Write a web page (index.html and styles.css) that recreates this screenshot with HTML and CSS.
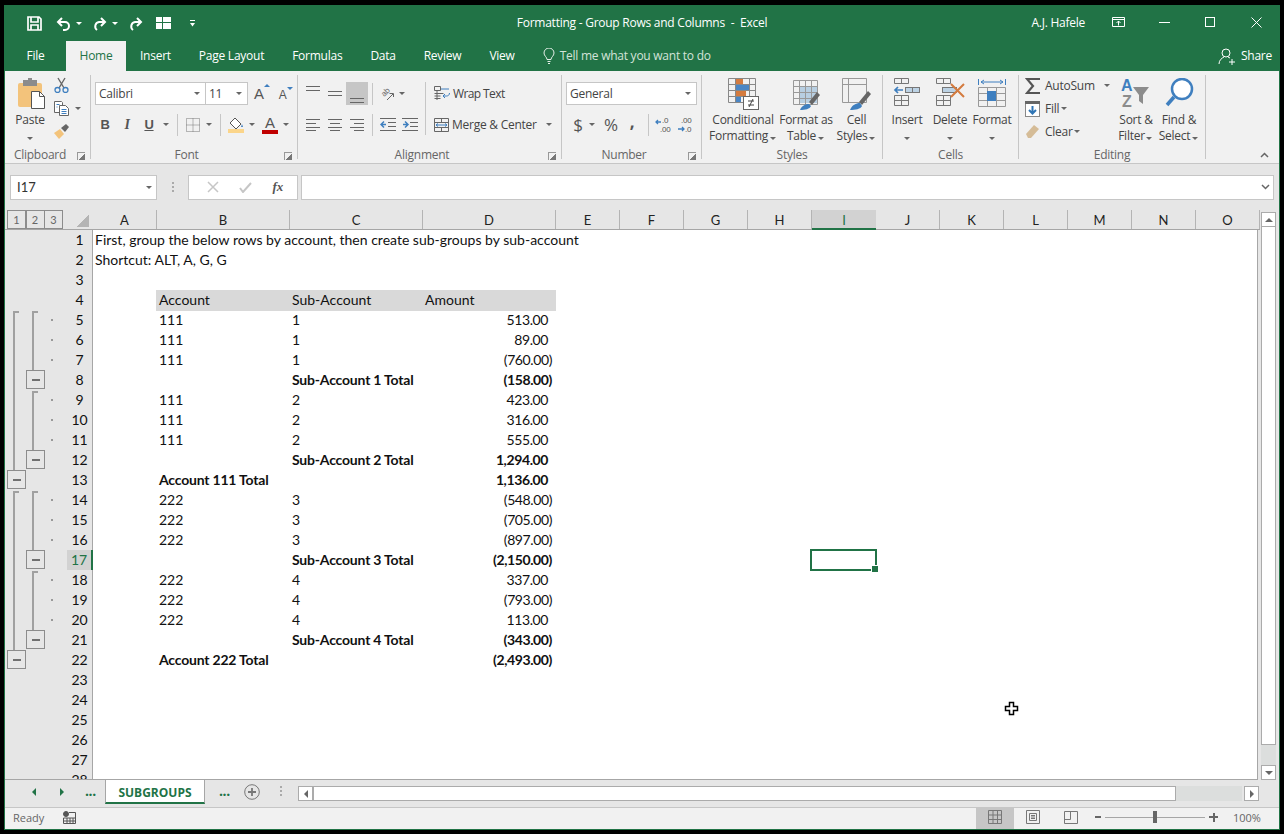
FILE: index.html
```html
<!DOCTYPE html>
<html lang="en">
<head>
    <meta charset="UTF-8">
    <title>Formatting - Group Rows and Columns - Excel</title>
    <link rel="stylesheet" href="styles.css">
</head>
<body>
<div class="window">

    <!-- title bar -->
    <div class="titlebar">
        <div class="qat">
            <svg class="ml0" width="15" height="15" viewBox="0 0 15 15" fill="none" stroke="#fff" stroke-width="1.7"><path d="M1 1h11l2 2v11H1zM4 1v5h7V1M4 14V9h7v5"/></svg>
            <svg class="ml14" width="15" height="15" viewBox="0 0 15 15" fill="none" stroke="#fff" stroke-width="2"><path d="M6 2L2 6l4 4M2 6h7a4 4 0 0 1 0 8H7"/></svg>
            <span class="caret-w ml5"></span>
            <svg class="ml10" width="15" height="15" viewBox="0 0 15 15" fill="none" stroke="#fff" stroke-width="2"><path d="M9 2l4 4-4 4M13 6H7a4.500 4.500 0 0 0-2 8"/></svg>
            <span class="caret-w ml5"></span>
            <svg class="ml10" width="15" height="15" viewBox="0 0 15 15" fill="none" stroke="#fff" stroke-width="2"><path d="M9 2l4 4-4 4M13 6H7a4.500 4.500 0 0 0-2 8"/></svg>
            <svg class="ml13" width="15" height="12" viewBox="0 0 15 12" fill="#fff"><rect width="6" height="5"/><rect x="7" width="8" height="5"/><rect y="6" width="6" height="6"/><rect x="7" y="6" width="8" height="6"/></svg>
            <svg class="ml18" width="7" height="7" viewBox="0 0 7 7" fill="#fff"><rect x="1" width="5" height="1"/><path d="M1 3h5L3.500 6.500z"/></svg>
        </div>
        <div class="doc-title">Formatting - Group Rows and Columns &nbsp;-&nbsp; Excel</div>
        <div class="win-right">
            <span class="user">A.J. Hafele</span>
            <span class="win-btn"><svg width="13" height="10" viewBox="0 0 13 10" fill="none" stroke="#fff"><path d="M.5.500h12v9H.5zM.5 2.500h12M6.500 8.500V4M4.500 6l2-2 2 2"/></svg></span>
            <span class="win-btn"><svg width="11" height="1" viewBox="0 0 11 1"><rect width="11" height="1" fill="#fff"/></svg></span>
            <span class="win-btn"><svg width="10" height="10" viewBox="0 0 10 10" fill="none" stroke="#fff"><rect x=".5" y=".5" width="9" height="9"/></svg></span>
            <span class="win-btn"><svg width="11" height="11" viewBox="0 0 11 11" stroke="#fff"><path d="M.5.500l10 10M10.500.500l-10 10"/></svg></span>
        </div>
    </div>

    <!-- ribbon tabs -->
    <div class="tabs">
        <span class="tab file">File</span>
        <span class="tab active">Home</span>
        <span class="tab">Insert</span>
        <span class="tab">Page Layout</span>
        <span class="tab">Formulas</span>
        <span class="tab">Data</span>
        <span class="tab">Review</span>
        <span class="tab">View</span>
        <span class="tell">
            <svg width="12" height="16" viewBox="0 0 12 16" fill="none" stroke="#e6efe9"><path d="M4 11.500C4 9 1 8 1 5a5 5 0 0 1 10 0c0 3-3 4-3 6.500zM4.500 13.500h3M5 15.500h2"/></svg>
            Tell me what you want to do
        </span>
        <span class="share">
            <svg width="18" height="17" viewBox="0 0 18 17" fill="none" stroke="#fff"><circle cx="8" cy="5" r="4"/><path d="M1 16c0-4 3-6 5-7M10 9l2 1M11 14h6M14 11v6"/></svg>
            Share
        </span>
    </div>

    <!-- ribbon -->
    <div class="ribbon">

        <div class="group clipboard">
            <div class="group-body">
                <div class="big paste">
                    <svg width="30" height="32" viewBox="0 0 30 32"><rect x="1" y="5" width="24" height="24" rx="2" fill="#f3c37b"/><rect x="6" y="2" width="14" height="6" fill="#8c8c8c"/><rect x="11" y="0" width="4" height="4" fill="#8c8c8c"/><path d="M14.500 13.500h8l5 5v12h-13z" fill="#fff" stroke="#555"/><path d="M22.500 13.500v5h5" fill="none" stroke="#555"/></svg>
                    <span class="big-label">Paste<br><i class="caret"></i></span>
                </div>
                <div class="clip-tools">
                    <svg width="15" height="16" viewBox="0 0 15 16" fill="none"><path d="M4 1l6 10M11 1L5 11" stroke="#666" stroke-width="1.400"/><circle cx="3.500" cy="13" r="2.500" stroke="#3f7fbf" stroke-width="1.300"/><circle cx="11.500" cy="13" r="2.500" stroke="#3f7fbf" stroke-width="1.300"/></svg>
                    <span class="copy-row">
                        <svg width="15" height="15" viewBox="0 0 15 15" fill="#fff" stroke="#666"><path d="M.5.500h7l1 1v10H.5z"/><path d="M5.500 4.500h6l3 3v7h-9z"/><path d="M2.500 3.500h3M2.500 6h1M7.500 8.500h5M7.500 10.500h5M7.500 12.500h5" stroke="#3f7fbf"/></svg>
                        <i class="caret"></i>
                    </span>
                    <svg width="16" height="15" viewBox="0 0 16 15"><path d="M0 9l6-4 4 5-5 5z" fill="#f3c37b"/><path d="M7 4l5-4 3 3-4 5z" fill="#666"/></svg>
                </div>
            </div>
            <div class="group-label"><span>Clipboard</span><i class="launcher"></i></div>
        </div>

        <div class="group font">
            <div class="group-body stack">
                <div class="tool-row pad4">
                    <span class="combo w-font">Calibri<i class="caret"></i></span>
                    <span class="combo w-size">11<i class="caret"></i></span>
                    <span class="grow-a">A<i class="up"></i></span>
                    <span class="shrink-a">A<i class="down"></i></span>
                </div>
                <div class="tool-row pad3">
                    <span class="tool t22 bold-t">B</span>
                    <span class="tool t22 ital-t">I</span>
                    <span class="tool t22 under-t">U</span>
                    <i class="caret"></i>
                    <span class="sep"></span>
                    <span class="tool t19">
                        <svg width="14" height="14" viewBox="0 0 14 14" fill="none" stroke="#777" stroke-dasharray="1 1"><path d="M.5.500h13v13H.5zM7 .5v13M.5 7h13"/></svg>
                    </span>
                    <i class="caret ml1"></i>
                    <span class="sep"></span>
                    <span class="tool t20">
                        <svg width="16" height="16" viewBox="0 0 16 16"><path d="M7 1l6 6-5 5-6-6z" fill="#fff" stroke="#555"/><path d="M14 7l1 3h-2z" fill="#3f7fbf"/><rect y="12" width="16" height="4" fill="#fbd58a"/></svg>
                    </span>
                    <i class="caret"></i>
                    <span class="tool t20 color-a ml2">A</span>
                    <i class="caret"></i>
                </div>
            </div>
            <div class="group-label"><span>Font</span><i class="launcher"></i></div>
        </div>

        <div class="group align">
            <div class="group-body split">
                <div class="stack w-align">
                    <div class="tool-row pad4">
                        <span class="tool t22 al-top"><i class="lines"></i></span>
                        <span class="tool t22"><i class="lines"></i></span>
                        <span class="tool t22 al-bot selected"><i class="lines"></i></span>
                        <span class="sep ml4"></span>
                        <span class="tool t18 ml5">
                            <svg width="18" height="17" viewBox="0 0 18 17" fill="none" stroke="#666"><text x="3" y="10" class="orient" transform="rotate(-45 7 7)">ab</text><path d="M9 15l6-6M11.500 8.500h4V12"/></svg>
                        </span>
                        <i class="caret"></i>
                    </div>
                    <div class="tool-row pad4">
                        <span class="tool t22"><i class="text-lines left"></i></span>
                        <span class="tool t22"><i class="text-lines center"></i></span>
                        <span class="tool t22"><i class="text-lines right"></i></span>
                        <span class="sep ml4"></span>
                        <span class="tool t22 ml4">
                            <svg width="16" height="13" viewBox="0 0 16 13" fill="none"><path d="M0 .5h16M8 4.500h8M8 8.500h8M0 12.500h16" stroke="#666"/><path d="M6 6.500H1M4 3.500l-3 3 3 3" stroke="#3f7fbf" stroke-width="1.500"/></svg>
                        </span>
                        <span class="tool t22">
                            <svg width="16" height="13" viewBox="0 0 16 13" fill="none"><path d="M0 .5h16M8 4.500h8M8 8.500h8M0 12.500h16" stroke="#666"/><path d="M1 6.500h5M3 3.500l3 3-3 3" stroke="#3f7fbf" stroke-width="1.500"/></svg>
                        </span>
                    </div>
                </div>
                <span class="vsep"></span>
                <div class="stack pad8">
                    <div class="tool-row">
                        <svg width="16" height="15" viewBox="0 0 16 15" fill="none" stroke="#666"><path d="M.5.500h6v4h-6zM.5 7.500h9M.5 10h6M.5 12.500h6M3 4.500V14"/><path d="M7 3h8M15.500 7c0 2-1.500 3-3 3H9M11 8l-2 2 2 2" stroke="#3f7fbf"/></svg>
                        <span class="tool-text wrap-text">Wrap Text</span>
                    </div>
                    <div class="tool-row">
                        <svg width="15" height="14" viewBox="0 0 15 14" fill="none" stroke="#666"><path d="M.5.500h14v13H.5zM.5 4.500h14M.5 9.500h14M7.500.5v4M7.500 9.500v4"/><path d="M2 7h11M4 5.500L2 7l2 1.500M11 5.500L13 7l-2 1.500" stroke="#3f7fbf"/></svg>
                        <span class="tool-text">Merge &amp; Center</span>
                        <i class="caret merge-caret"></i>
                    </div>
                </div>
            </div>
            <div class="group-label"><span>Alignment</span><i class="launcher"></i></div>
        </div>

        <div class="group number">
            <div class="group-body stack">
                <div class="tool-row pad4">
                    <span class="combo w-general">General<i class="caret"></i></span>
                </div>
                <div class="tool-row pad8">
                    <span class="tool t16 money">$</span>
                    <i class="caret"></i>
                    <span class="tool t22 money ml2">%</span>
                    <span class="tool t20 money comma">,</span>
                    <span class="sep ml6"></span>
                    <span class="tool t22 ml3">
                        <svg width="16" height="16" viewBox="0 0 16 16" class="dec-icon"><text x="7" y="6">.0</text><text x="5" y="15">.00</text><path d="M6 5H1M3 3L1 5l2 2" fill="none" stroke="#3f7fbf" stroke-width="1.300"/></svg>
                    </span>
                    <span class="tool t22">
                        <svg width="16" height="16" viewBox="0 0 16 16" class="dec-icon"><text x="4" y="6">.00</text><text x="8" y="15">.0</text><path d="M1 12h6M5 10l2 2-2 2" fill="none" stroke="#3f7fbf" stroke-width="1.300"/></svg>
                    </span>
                </div>
            </div>
            <div class="group-label"><span>Number</span><i class="launcher"></i></div>
        </div>

        <div class="group styles">
            <div class="group-body rowbtns ml5">
                <div class="big w72">
                    <svg width="31" height="32" viewBox="0 0 31 32" fill="none"><path d="M.5.500h27v24H.5zM.5 6.500h27M.5 12.500h27M.5 18.500h27M7.500.5v24M21.500.5v24" stroke="#888"/><rect x="8" y="1" width="7" height="5" fill="#d47b3f"/><rect x="8" y="7" width="13" height="5" fill="#4a86c5"/><rect x="8" y="13" width="10" height="5" fill="#d47b3f"/><rect x="8" y="19" width="5" height="5" fill="#4a86c5"/><rect x="15.500" y="18.500" width="15" height="13" fill="#fff" stroke="#666"/><path d="M20 23h6M20 27h6M25 21l-4 8" stroke="#444"/></svg>
                    <span class="big-label">Conditional<br>Formatting<i class="caret tight"></i></span>
                </div>
                <div class="big w54">
                    <svg width="30" height="32" viewBox="-2 -2 30 32" fill="none"><rect x="7" y="6" width="18" height="17" fill="#b8cfe2"/><path d="M.5.500h24v24H.5zM.5 6.500h24M.5 12.500h24M.5 18.500h24M6.500.5v24M12.500.5v24M18.500.5v24" stroke="#999"/><path d="M16 22l8-10 3 3-8 10z" fill="#666"/><path d="M7 30c2-5 6-6 9-6l2 2c-1 3-6 4-11 4z" fill="#3f7fbf"/></svg>
                    <span class="big-label">Format as<br>Table<i class="caret tight"></i></span>
                </div>
                <div class="big w47">
                    <svg width="30" height="32" viewBox="0 0 30 32" fill="none"><path d="M.5.500h24v24H.5zM.5 6.500h24M6.500.5v24" stroke="#999"/><path d="M17 24l9-11 3 3-9 11z" fill="#666"/><path d="M8 32c2-5 6-7 10-7l2 3c-1 3-7 4-12 4z" fill="#3f7fbf"/></svg>
                    <span class="big-label">Cell<br>Styles<i class="caret tight"></i></span>
                </div>
            </div>
            <div class="group-label"><span>Styles</span></div>
        </div>

        <div class="group cells">
            <div class="group-body rowbtns ml3">
                <div class="big w42">
                    <svg width="28" height="32" viewBox="0 0 28 32" fill="none" stroke="#777"><path d="M1.500.5h14v5h-14zM8.500.5v5M1.500 17.500h14v10h-14zM1.500 22.500h14M8.500 17.500v10"/><rect x="12.500" y="9.500" width="14" height="5" fill="#bcd2e4"/><path d="M19.500 9.500v5M26.500 9.500"/><path d="M10 12H2M5 9l-3 3 3 3" stroke="#3f7fbf" stroke-width="1.700"/></svg>
                    <span class="big-label">Insert<br><i class="caret"></i></span>
                </div>
                <div class="big w44">
                    <svg width="30" height="32" viewBox="0 0 30 32" fill="none" stroke="#777"><path d="M1.500.5h14v5h-14zM8.500.5v5M1.500 17.500h14v10h-14zM1.500 22.500h14M8.500 17.500v10"/><rect x="7.500" y="9.500" width="14" height="5" fill="#bcd2e4"/><path d="M16 6l13 13M29 6L16 19" stroke="#d47b3f" stroke-width="2"/></svg>
                    <span class="big-label">Delete<br><i class="caret"></i></span>
                </div>
                <div class="big w40">
                    <svg width="28" height="32" viewBox="0 0 28 32" fill="none" stroke="#999"><path d="M.5 1v6M27.500 1v6M3 4h22M6 2L3 4l3 2M22 2l3 2-3 2" stroke="#3f7fbf"/><path d="M.5 9.500h27v19H.5zM.5 15.500h27M.5 22.500h27M9.500 9.500v19M18.500 9.500v19"/><rect x="9" y="13" width="9" height="10" fill="#3f7fbf" stroke="none"/></svg>
                    <span class="big-label">Format<br><i class="caret"></i></span>
                </div>
            </div>
            <div class="group-label"><span>Cells</span></div>
        </div>

        <div class="group editing">
            <div class="group-body rowbtns">
                <div class="edit-tools">
                    <div class="edit-row">
                        <svg width="15" height="16" viewBox="0 0 15 16" fill="none" stroke="#555" stroke-width="2.200"><path d="M15 1H2l6 7-6 7h13"/></svg>
                        <span class="tool-text">AutoSum</span><i class="caret sum-caret"></i>
                    </div>
                    <div class="edit-row">
                        <svg width="15" height="16" viewBox="0 0 15 16"><rect x=".5" y=".5" width="14" height="15" fill="#fff" stroke="#888"/><rect width="15" height="3" fill="#666"/><path d="M7.500 5v7M4 9l3.500 3.500L11 9" fill="none" stroke="#2f75b5" stroke-width="2"/></svg>
                        <span class="tool-text">Fill</span><i class="caret tight"></i>
                    </div>
                    <div class="edit-row">
                        <svg width="15" height="15" viewBox="0 0 15 15"><path d="M1 10l8-9 5 4-8 9H3z" fill="#d5bc97"/></svg>
                        <span class="tool-text">Clear</span><i class="caret tight"></i>
                    </div>
                </div>
                <div class="big w44">
                    <svg width="30" height="32" viewBox="0 0 30 32"><text x="0" y="13" class="az a">A</text><text x="1" y="29" class="az z">Z</text><path d="M12 9h16l-6 8v9l-4-3v-6z" fill="#8c8c8c"/></svg>
                    <span class="big-label">Sort &amp;<br>Filter<i class="caret tight"></i></span>
                </div>
                <div class="big w42">
                    <svg width="29" height="32" viewBox="0 0 29 32" fill="none" stroke="#3f7fbf"><circle cx="17" cy="11" r="10" stroke-width="2.500" fill="#fff"/><path d="M9 19L2 27" stroke-width="3.500"/></svg>
                    <span class="big-label">Find &amp;<br>Select<i class="caret tight"></i></span>
                </div>
            </div>
            <div class="group-label"><span>Editing</span></div>
        </div>

        <div class="collapse">
            <svg width="9" height="6" viewBox="0 0 9 6" fill="none" stroke="#666" stroke-width="1.500"><path d="M1 5l3.500-3.500L8 5"/></svg>
        </div>
    </div>

    <!-- name box and formula bar -->
    <div class="formula-bar">
        <div class="name-box">I17<i class="caret"></i></div>
        <div class="grip"></div>
        <div class="fx-box">
            <svg width="12" height="12" viewBox="0 0 12 12" stroke="#c6c6c6" stroke-width="1.500"><path d="M1 1l10 10M11 1L1 11"/></svg>
            <svg width="13" height="11" viewBox="0 0 13 11" fill="none" stroke="#c6c6c6" stroke-width="2"><path d="M1 6l3 4 8-9"/></svg>
            <span class="fx">fx</span>
        </div>
        <div class="formula-input"></div>
        <svg class="formula-chevron" width="9" height="6" viewBox="0 0 9 6" fill="none" stroke="#666" stroke-width="1.500"><path d="M1 1l3.500 3.500L8 1"/></svg>
    </div>

    <!-- worksheet -->
    <div class="sheet">
        <div class="sheet-main">
            <div class="col-row">
                <div class="levels"><span>1</span><span>2</span><span>3</span></div>
                <div class="corner"><i></i></div>
                <div class="col c-a">A</div>
                <div class="col c-b">B</div>
                <div class="col c-b">C</div>
                <div class="col c-b">D</div>
                <div class="col">E</div>
                <div class="col">F</div>
                <div class="col">G</div>
                <div class="col">H</div>
                <div class="col current">I</div>
                <div class="col">J</div>
                <div class="col">K</div>
                <div class="col">L</div>
                <div class="col">M</div>
                <div class="col">N</div>
                <div class="col">O</div>
            </div>
            <div class="rows">
                <div class="row"><div class="outline"></div><div class="num">1</div><div class="cell wide">First, group the below rows by account, then create sub-groups by sub-account</div></div>
                <div class="row"><div class="outline"></div><div class="num">2</div><div class="cell wide">Shortcut: ALT, A, G, G</div></div>
                <div class="row"><div class="outline"></div><div class="num">3</div></div>
                <div class="row"><div class="outline"></div><div class="num">4</div><div class="cell"></div><div class="cell head">Account</div><div class="cell head">Sub-Account</div><div class="cell head">Amount</div></div>
                <div class="row"><div class="outline"><i class="line top"></i><i class="line top"></i><i class="dot"></i></div><div class="num">5</div><div class="cell"></div><div class="cell">111</div><div class="cell">1</div><div class="cell amt">513.00</div></div>
                <div class="row"><div class="outline"><i class="line"></i><i class="line"></i><i class="dot"></i></div><div class="num">6</div><div class="cell"></div><div class="cell">111</div><div class="cell">1</div><div class="cell amt">89.00</div></div>
                <div class="row"><div class="outline"><i class="line"></i><i class="line"></i><i class="dot"></i></div><div class="num">7</div><div class="cell"></div><div class="cell">111</div><div class="cell">1</div><div class="cell amt neg">(760.00)</div></div>
                <div class="row total"><div class="outline"><i class="line"></i><i class="minus"></i></div><div class="num">8</div><div class="cell"></div><div class="cell"></div><div class="cell">Sub-Account 1 Total</div><div class="cell amt neg">(158.00)</div></div>
                <div class="row"><div class="outline"><i class="line"></i><i class="line top"></i><i class="dot"></i></div><div class="num">9</div><div class="cell"></div><div class="cell">111</div><div class="cell">2</div><div class="cell amt">423.00</div></div>
                <div class="row"><div class="outline"><i class="line"></i><i class="line"></i><i class="dot"></i></div><div class="num">10</div><div class="cell"></div><div class="cell">111</div><div class="cell">2</div><div class="cell amt">316.00</div></div>
                <div class="row"><div class="outline"><i class="line"></i><i class="line"></i><i class="dot"></i></div><div class="num">11</div><div class="cell"></div><div class="cell">111</div><div class="cell">2</div><div class="cell amt">555.00</div></div>
                <div class="row total"><div class="outline"><i class="line"></i><i class="minus"></i></div><div class="num">12</div><div class="cell"></div><div class="cell"></div><div class="cell">Sub-Account 2 Total</div><div class="cell amt">1,294.00</div></div>
                <div class="row total"><div class="outline"><i class="minus"></i></div><div class="num">13</div><div class="cell"></div><div class="cell wide">Account 111 Total</div><div class="cell"></div><div class="cell amt">1,136.00</div></div>
                <div class="row"><div class="outline"><i class="line top"></i><i class="line top"></i><i class="dot"></i></div><div class="num">14</div><div class="cell"></div><div class="cell">222</div><div class="cell">3</div><div class="cell amt neg">(548.00)</div></div>
                <div class="row"><div class="outline"><i class="line"></i><i class="line"></i><i class="dot"></i></div><div class="num">15</div><div class="cell"></div><div class="cell">222</div><div class="cell">3</div><div class="cell amt neg">(705.00)</div></div>
                <div class="row"><div class="outline"><i class="line"></i><i class="line"></i><i class="dot"></i></div><div class="num">16</div><div class="cell"></div><div class="cell">222</div><div class="cell">3</div><div class="cell amt neg">(897.00)</div></div>
                <div class="row total"><div class="outline"><i class="line"></i><i class="minus"></i></div><div class="num current">17</div><div class="cell"></div><div class="cell"></div><div class="cell">Sub-Account 3 Total</div><div class="cell amt neg">(2,150.00)</div></div>
                <div class="row"><div class="outline"><i class="line"></i><i class="line top"></i><i class="dot"></i></div><div class="num">18</div><div class="cell"></div><div class="cell">222</div><div class="cell">4</div><div class="cell amt">337.00</div></div>
                <div class="row"><div class="outline"><i class="line"></i><i class="line"></i><i class="dot"></i></div><div class="num">19</div><div class="cell"></div><div class="cell">222</div><div class="cell">4</div><div class="cell amt neg">(793.00)</div></div>
                <div class="row"><div class="outline"><i class="line"></i><i class="line"></i><i class="dot"></i></div><div class="num">20</div><div class="cell"></div><div class="cell">222</div><div class="cell">4</div><div class="cell amt">113.00</div></div>
                <div class="row total"><div class="outline"><i class="line"></i><i class="minus"></i></div><div class="num">21</div><div class="cell"></div><div class="cell"></div><div class="cell">Sub-Account 4 Total</div><div class="cell amt neg">(343.00)</div></div>
                <div class="row total"><div class="outline"><i class="minus"></i></div><div class="num">22</div><div class="cell"></div><div class="cell wide">Account 222 Total</div><div class="cell"></div><div class="cell amt neg">(2,493.00)</div></div>
                <div class="row"><div class="outline"></div><div class="num">23</div></div>
                <div class="row"><div class="outline"></div><div class="num">24</div></div>
                <div class="row"><div class="outline"></div><div class="num">25</div></div>
                <div class="row"><div class="outline"></div><div class="num">26</div></div>
                <div class="row"><div class="outline"></div><div class="num">27</div></div>
                <div class="row"><div class="outline"></div><div class="num">28</div></div>
                <div class="selection"></div>
                <svg class="cursor" width="15" height="16" viewBox="0 0 15 16"><path d="M5.500 1.500h4v4h4v4h-4v4h-4v-4h-4v-4h4z" fill="#fff" stroke="#000" stroke-width="1.500"/></svg>
            </div>
        </div>
        <div class="vscroll">
            <span class="sb-btn"><i class="tri-up"></i></span>
            <span class="sb-thumb"></span>
            <span class="sb-track"></span>
            <span class="sb-btn"><i class="tri-down"></i></span>
        </div>
    </div>

    <!-- sheet tabs -->
    <div class="tabbar">
        <span class="nav first"><i class="tri-left"></i></span>
        <span class="nav"><i class="tri-right"></i></span>
        <span class="more m1">...</span>
        <span class="sheet-tab">SUBGROUPS</span>
        <span class="more m2">...</span>
        <svg width="16" height="16" viewBox="0 0 16 16" fill="none" stroke="#777"><circle cx="8" cy="8" r="7.300"/><path d="M8 4v8M4 8h8" stroke-width="1.800"/></svg>
        <span class="vdots"><i></i><i></i><i></i></span>
        <div class="hscroll">
            <span class="sb-btn h"><i class="tri-left grey"></i></span>
            <span class="sb-thumb h"></span>
            <span class="sb-track h"></span>
            <span class="sb-btn h"><i class="tri-right grey"></i></span>
        </div>
    </div>

    <!-- status bar -->
    <div class="statusbar">
        <span class="ready">Ready</span>
        <svg class="macro" width="13" height="13" viewBox="0 0 13 13" fill="none" stroke="#555"><circle cx="3" cy="3" r="2.500" fill="#555"/><path d="M6 1.500h6.500v11H.5V7h12M4 7v5.500M7 7v5.500M10 7v5.500M.5 10h12"/></svg>
        <div class="views">
            <span class="view selected">
                <svg width="14" height="14" viewBox="0 0 14 14" fill="none" stroke="#777"><path d="M.5.500h13v13H.5zM5 .5v13M9.500.5v13M.5 5h13M.5 9.500h13"/></svg>
            </span>
            <span class="view">
                <svg width="14" height="14" viewBox="0 0 14 14" fill="none" stroke="#777"><path d="M.5.500h13v13H.5zM3.500 3.500h7v7h-7zM5 5.500h4M5 7h4M5 8.500h4"/></svg>
            </span>
            <span class="view">
                <svg width="14" height="13" viewBox="0 0 14 13" fill="none" stroke="#777"><path d="M.5.500h13v12H.5zM.5 8.500h6V.5M6.500 8.500"/></svg>
            </span>
        </div>
        <span class="zoom-minus"></span>
        <div class="slider"><i></i></div>
        <span class="zoom-plus"></span>
        <span class="zoom-pct">100%</span>
    </div>
</div>
</body>
</html>
```

FILE: styles.css
```css
* {
    box-sizing: border-box;
}
body {
    margin: 5px 4px 4px;
    background: #000;
    font-family: "Open Sans", sans-serif;
    font-size: 12px;
    letter-spacing: -0.25px;
    color: #444;
}
i {
    font-style: normal;
}
.window {
    width: 1276px;
    height: 825px;
    border: 1px solid #217346;
    display: flex;
    flex-direction: column;
    background: #e6e6e6;
    overflow: hidden;
}

/* title bar */
.titlebar {
    height: 35px;
    flex: none;
    background: #217346;
    color: #fff;
    display: grid;
    grid-template-columns: 1fr auto 1fr;
    align-items: center;
}
.qat {
    display: flex;
    align-items: center;
    padding: 0 0 1px 22px;
}
.ml0 { margin-left: 0; }
.ml1 { margin-left: 1px; }
.ml2 { margin-left: 2px; }
.ml3 { margin-left: 3px; }
.ml4 { margin-left: 4px; }
.ml5 { margin-left: 5px; }
.ml6 { margin-left: 6px; }
.ml10 { margin-left: 10px; }
.ml13 { margin-left: 13px; }
.ml14 { margin-left: 14px; }
.ml18 { margin-left: 18px; }
.caret-w {
    width: 0;
    height: 0;
    border: 3px solid transparent;
    border-top-color: #fff;
    border-bottom: 0;
}
.doc-title {
    padding-bottom: 3px;
}
.win-right {
    display: flex;
    justify-content: flex-end;
    align-items: center;
    padding-bottom: 3px;
}
.user {
    margin-right: 10px;
}
.win-btn {
    width: 46px;
    display: flex;
    justify-content: center;
}

/* tabs */
.tabs {
    height: 30px;
    flex: none;
    background: #217346;
    color: #fff;
    display: flex;
    align-items: stretch;
    line-height: 30px;
}
.tab {
    padding: 0 14px;
}
.tab.file {
    width: 61px;
    padding: 0;
    text-align: center;
}
.tab.active {
    width: 60px;
    padding: 0;
    text-align: center;
    background: #f1f1f1;
    color: #217346;
}
.tell {
    display: flex;
    align-items: center;
    gap: 5px;
    margin-left: 14px;
    color: #d3e3d9;
}
.share {
    margin-left: auto;
    display: flex;
    align-items: center;
    gap: 5px;
    padding-right: 7px;
}

/* ribbon */
.ribbon {
    height: 93px;
    flex: none;
    display: flex;
    align-items: flex-start;
    background: #f1f1f1;
    border-bottom: 1px solid #c6c6c6;
    position: relative;
}
.group {
    height: 84px;
    margin-top: 4px;
    border-right: 1px solid #c6c6c6;
    display: flex;
    flex-direction: column;
    flex: none;
}
.clipboard { width: 86px; }
.font { width: 207px; }
.align { width: 264px; }
.number { width: 140px; }
.styles { width: 181px; }
.cells { width: 136px; }
.editing { width: 187px; }
.group-body {
    height: 72px;
    display: flex;
}
.group-label {
    height: 12px;
    line-height: 16px;
    display: flex;
    color: #666;
}
.group-label span {
    flex: 1;
    text-align: center;
}
.launcher {
    width: 15px;
    flex: none;
}
.launcher::before {
    content: "";
    display: block;
    width: 7px;
    height: 7px;
    margin-top: 5px;
    margin-left: 2px;
    border-left: 1px solid #999;
    border-top: 1px solid #999;
    background: linear-gradient(135deg, transparent 55%, #777 55%);
}
.stack {
    display: flex;
    flex-direction: column;
    gap: 8px;
    padding-top: 7px;
}
.tool-row {
    height: 23px;
    display: flex;
    align-items: center;
    flex: none;
}
.pad3 { padding-left: 3px; }
.pad4 { padding-left: 4px; }
.pad8 { padding-left: 8px; }
.tool {
    height: 23px;
    display: flex;
    align-items: center;
    justify-content: center;
    flex: none;
}
.t16 { width: 16px; }
.t18 { width: 18px; }
.t19 { width: 19px; }
.t20 { width: 20px; }
.t22 { width: 22px; }
.sep {
    width: 1px;
    height: 22px;
    margin: 0 5px;
    background: #c6c6c6;
    flex: none;
}
.sep.ml4 { margin: 0 0 0 4px; }
.sep.ml6 { margin: 0 0 0 6px; }
.vsep {
    width: 1px;
    height: 53px;
    margin-top: 7px;
    background: #c6c6c6;
    flex: none;
}
.caret {
    width: 12px;
    height: 10px;
    flex: none;
    display: inline-flex;
    align-items: center;
    justify-content: center;
}
.caret::after {
    content: "";
    border: 3px solid transparent;
    border-top-color: #666;
    border-bottom: 0;
}
.caret.tight {
    width: 9px;
}
.big {
    display: flex;
    flex-direction: column;
    align-items: center;
    padding-top: 3px;
    flex: none;
    text-align: center;
    color: #444;
}
.big svg {
    flex: none;
}
.big-label {
    margin-top: 2px;
    line-height: 16px;
    white-space: nowrap;
}
.big-label .caret {
    vertical-align: 0;
}
.paste {
    width: 36px;
    margin-left: 7px;
}
.paste svg {
    height: 32px;
    margin-left: 3px;
}
.clip-tools {
    display: flex;
    flex-direction: column;
    padding: 2px 0 0 6px;
    gap: 8px;
}
.copy-row {
    display: flex;
    align-items: center;
    gap: 3px;
}
.combo {
    height: 23px;
    border: 1px solid #c6c6c6;
    background: #fff;
    display: flex;
    align-items: center;
    justify-content: space-between;
    padding-left: 3px;
    padding-right: 2px;
    flex: none;
}
.w-font { width: 111px; }
.w-size { width: 42px; margin-left: 0; border-left: 0; }
.w-general { width: 131px; }
.grow-a, .shrink-a {
    display: flex;
    align-items: flex-start;
    font-family: "Liberation Sans", sans-serif;
    color: #555;
    flex: none;
}
.grow-a {
    font-size: 15px;
    margin-left: 6px;
}
.shrink-a {
    font-size: 12px;
    margin-left: 9px;
    padding-top: 2px;
}
.up, .down {
    border: 3px solid transparent;
    margin-top: -1px;
}
.up { border-bottom-color: #3f7fbf; border-top: 0; }
.down { border-top-color: #3f7fbf; border-bottom: 0; }
.bold-t, .ital-t, .under-t {
    font-family: "Liberation Sans", sans-serif;
    font-size: 13px;
    color: #555;
}
.bold-t { font-weight: bold; }
.ital-t { font-style: italic; font-family: "Liberation Serif", serif; font-size: 14px; font-weight: bold; }
.under-t { text-decoration: underline; font-weight: bold; }
.color-a {
    font-family: "Liberation Sans", sans-serif;
    font-size: 15px;
    line-height: 13px;
    color: #555;
    flex-direction: column;
}
.color-a::after {
    content: "";
    width: 16px;
    height: 4px;
    background: #c00000;
    margin-top: 1px;
}
.w-align {
    width: 127px;
}
.split {
    align-items: flex-start;
}
.lines {
    width: 14px;
    height: 5px;
    border-top: 1px solid #666;
    border-bottom: 1px solid #666;
}
.al-top {
    align-items: flex-start;
    padding-top: 4px;
}
.al-bot {
    align-items: flex-end;
    padding-bottom: 2px;
}
.selected {
    background: #c6c6c6;
}
.orient {
    font-family: "Liberation Sans", sans-serif;
    font-size: 8px;
    fill: #666;
    stroke: none;
}
.text-lines {
    width: 14px;
    height: 12px;
    background:
        linear-gradient(#666, #666) 0 0 / 14px 1px no-repeat,
        linear-gradient(#666, #666) 0 4px / 10px 1px no-repeat,
        linear-gradient(#666, #666) 0 8px / 14px 1px no-repeat,
        linear-gradient(#666, #666) 0 11px / 10px 1px no-repeat;
}
.text-lines.center {
    background:
        linear-gradient(#666, #666) 0 0 / 14px 1px no-repeat,
        linear-gradient(#666, #666) 2px 4px / 10px 1px no-repeat,
        linear-gradient(#666, #666) 0 8px / 14px 1px no-repeat,
        linear-gradient(#666, #666) 2px 11px / 10px 1px no-repeat;
}
.text-lines.right {
    background:
        linear-gradient(#666, #666) 0 0 / 14px 1px no-repeat,
        linear-gradient(#666, #666) 4px 4px / 10px 1px no-repeat,
        linear-gradient(#666, #666) 0 8px / 14px 1px no-repeat,
        linear-gradient(#666, #666) 4px 11px / 10px 1px no-repeat;
}
.tool-text {
    margin-left: 3px;
}
.wrap-text {
    letter-spacing: -0.6px;
}
.merge-caret {
    margin-left: 6px;
}
.money {
    font-size: 17px;
    color: #555;
}
.comma {
    font-weight: bold;
    padding-bottom: 6px;
}
.dec-icon {
    font-family: "Liberation Sans", sans-serif;
    font-size: 8px;
    fill: #555;
}
.rowbtns {
    align-items: flex-start;
}
.w40 { width: 40px; }
.w42 { width: 42px; }
.w44 { width: 44px; }
.w47 { width: 47px; }
.w54 { width: 54px; }
.w72 { width: 72px; }
.edit-tools {
    width: 95px;
    padding-left: 6px;
    margin-top: -1px;
    flex: none;
}
.edit-row {
    height: 23px;
    display: flex;
    align-items: center;
}
.edit-row .tool-text {
    margin-left: 5px;
}
.sum-caret {
    margin-left: 6px;
}
.az {
    font-family: "Liberation Sans", sans-serif;
    font-weight: bold;
    font-size: 16px;
}
.az.a { fill: #3f7fbf; }
.az.z { fill: #8c8c8c; }
.collapse {
    position: absolute;
    right: 10px;
    bottom: 5px;
    line-height: 0;
}

/* formula bar */
.formula-bar {
    height: 46px;
    flex: none;
    display: flex;
    align-items: center;
    padding: 0 5px;
}
.name-box {
    width: 147px;
    height: 25px;
    background: #fff;
    border: 1px solid #c6c6c6;
    display: flex;
    align-items: center;
    justify-content: space-between;
    padding-left: 6px;
    padding-right: 1px;
    font-family: Lato, sans-serif;
    font-size: 13px;
    letter-spacing: 0;
    color: #333;
}
.grip {
    width: 2px;
    height: 10px;
    margin: 0 14px 0 15px;
    background: repeating-linear-gradient(#aaa 0 2px, transparent 2px 4px);
}
.fx-box {
    width: 110px;
    height: 25px;
    background: #fff;
    border: 1px solid #c6c6c6;
    display: flex;
    align-items: center;
    justify-content: space-around;
    padding: 0 4px 0 8px;
}
.fx {
    font-family: "Liberation Serif", serif;
    font-style: italic;
    font-weight: bold;
    font-size: 13px;
    color: #555;
}
.formula-input {
    width: 973px;
    height: 25px;
    margin-left: 3px;
    background: #fff;
    border: 1px solid #c6c6c6;
}
.formula-chevron {
    margin-left: -13px;
    position: relative;
}

/* worksheet */
.sheet {
    height: 570px;
    flex: none;
    display: flex;
}
.sheet-main {
    width: 1255px;
    flex: none;
    display: flex;
    flex-direction: column;
}
.col-row {
    height: 20px;
    flex: none;
    display: flex;
    border-bottom: 1px solid #a6a6a6;
    font-family: Lato, sans-serif;
    font-size: 13px;
    letter-spacing: 0;
    color: #222;
}
.levels {
    width: 62px;
    padding-left: 2px;
    display: flex;
    flex: none;
}
.levels span {
    width: 19px;
    height: 19px;
    border: 1px solid #8c8c8c;
    margin-right: -0.5px;
    text-align: center;
    line-height: 17px;
    font-size: 11px;
    color: #666;
}
.corner {
    width: 26px;
    flex: none;
    display: flex;
    justify-content: flex-end;
    align-items: flex-end;
    padding: 0 4px 2px 0;
}
.corner i {
    width: 12px;
    height: 12px;
    background: linear-gradient(135deg, transparent 50%, #b4b4b4 50%);
}
.col {
    width: 64px;
    flex: none;
    text-align: center;
    line-height: 20px;
    border-right: 1px solid #b4b4b4;
}
.col.c-a { width: 64px; }
.col.c-b { width: 133px; }
.col.current {
    background: #d2d2d2;
    border-bottom: 2px solid #217346;
    border-right: 0;
    height: 20px;
    color: #217346;
}
.rows {
    height: 550px;
    margin-right: 2px;
    background: #fff;
    border-right: 1px solid #a6a6a6;
    border-bottom: 1px solid #a6a6a6;
    overflow: hidden;
    position: relative;
    font-family: Lato, sans-serif;
    font-size: 14px;
    letter-spacing: 0;
    color: #111;
}
.row {
    height: 20px;
    display: grid;
    grid-template-columns: 62px 26px 63px 133px 133px 134px;
}
.outline {
    background: #e6e6e6;
    display: grid;
    grid-template-columns: 19px 19px 24px;
    height: 20px;
}
.line {
    width: 2px;
    margin-left: 8px;
    background: #a0a0a0;
}
.line.top {
    width: 6px;
    height: 19px;
    margin-top: 1px;
    background: linear-gradient(#a0a0a0, #a0a0a0) 0 0 / 6px 2px no-repeat,
        linear-gradient(#a0a0a0, #a0a0a0) 0 0 / 2px 100% no-repeat;
}
.dot {
    width: 2px;
    height: 2px;
    margin: 9px 0 0 8px;
    background: #999;
}
.minus {
    width: 19px;
    height: 19px;
    margin-left: 2px;
    border: 1px solid #8c8c8c;
    background: #e6e6e6;
    display: flex;
    align-items: center;
    justify-content: center;
}
.minus::before {
    content: "";
    width: 8px;
    height: 2px;
    background: #707070;
}
.num {
    background: #e6e6e6;
    border-right: 1px solid #a6a6a6;
    border-bottom: 1px solid #c6c6c6;
    text-align: center;
    line-height: 20px;
}
.num.current {
    background: #d2d2d2;
    border-right: 2px solid #217346;
    color: #217346;
}
.cell {
    padding-left: 3px;
    line-height: 20px;
    white-space: nowrap;
}
.cell.wide {
    padding-left: 2px;
}
.total .cell {
    font-weight: bold;
    letter-spacing: -0.2px;
}
.total .cell.wide {
    padding-left: 3px;
}
.cell.head {
    background: #d9d9d9;
}
.cell.amt, .total .cell.amt {
    text-align: right;
    padding-right: 8px;
    letter-spacing: -0.4px;
}
.cell.amt.neg {
    padding-right: 4px;
}
.selection {
    position: absolute;
    left: 805px;
    top: 319px;
    width: 67px;
    height: 22px;
    border: 2px solid #217346;
}
.selection::after {
    content: "";
    position: absolute;
    right: -4px;
    bottom: -4px;
    width: 6px;
    height: 6px;
    background: #217346;
    border: 1px solid #fff;
}
.cursor {
    position: absolute;
    left: 999px;
    top: 471px;
}
.vscroll {
    width: 15px;
    margin-left: 1px;
    padding-top: 2px;
    display: flex;
    flex-direction: column;
    background: #dcdedd;
    background-clip: content-box;
}
.sb-btn {
    height: 15px;
    flex: none;
    background: #fff;
    border: 1px solid #ababab;
    display: flex;
    align-items: center;
    justify-content: center;
}
.sb-thumb {
    height: 518px;
    flex: none;
    background: #fff;
    border: 1px solid #ababab;
    border-top: 0;
}
.sb-track {
    flex: 1;
}
.tri-up, .tri-down, .tri-left, .tri-right {
    width: 0;
    height: 0;
    border: 4px solid transparent;
}
.tri-up { border-bottom-color: #666; border-top: 0; }
.tri-down { border-top-color: #666; border-bottom: 0; }
.tri-left { border-right-color: #217346; border-left: 0; }
.tri-right { border-left-color: #217346; border-right: 0; }
.tri-left.grey { border-right-color: #666; }
.tri-right.grey { border-left-color: #666; }

/* sheet tabs */
.tabbar {
    height: 28px;
    flex: none;
    display: flex;
    align-items: flex-start;
    border-bottom: 1px solid #c6c6c6;
    padding-left: 15px;
}
.tabbar > svg {
    margin-top: 4px;
    flex: none;
}
.nav {
    width: 28px;
    height: 24px;
    display: flex;
    align-items: center;
    justify-content: center;
    flex: none;
}
.more {
    color: #217346;
    font-weight: bold;
    font-size: 14px;
    line-height: 22px;
    text-align: center;
    flex: none;
}
.m1 { width: 29px; }
.m2 { width: 39px; }
.sheet-tab {
    width: 100px;
    height: 24px;
    background: #fff;
    border: 1px solid #a6a6a6;
    border-top: 0;
    border-bottom: 2px solid #217346;
    color: #217346;
    font-weight: bold;
    text-align: center;
    line-height: 25px;
    letter-spacing: 0;
    flex: none;
}
.vdots {
    width: 38px;
    padding-top: 6px;
    padding-left: 4px;
    display: flex;
    flex-direction: column;
    align-items: center;
    gap: 2px;
    flex: none;
}
.vdots i {
    width: 2px;
    height: 2px;
    background: #aaa;
}
.hscroll {
    margin-top: 6px;
    height: 15px;
    width: 961px;
    display: flex;
    flex: none;
}
.sb-btn.h {
    width: 15px;
}
.sb-thumb.h {
    width: 863px;
    height: 15px;
    border: 1px solid #ababab;
}
.sb-track.h {
    background: #dcdedd;
    margin-right: 2px;
}

/* status bar */
.statusbar {
    height: 21px;
    flex: none;
    background: #f1f1f1;
    display: flex;
    align-items: center;
    padding: 0 0 3px 8px;
    color: #666;
    font-size: 11px;
    letter-spacing: 0;
}
.ready {
    width: 50px;
}
.macro {
    flex: none;
}
.views {
    display: flex;
    margin: 3px 0 0 auto;
    height: 21px;
}
.view {
    width: 38px;
    display: flex;
    align-items: center;
    justify-content: center;
    padding-bottom: 3px;
}
.zoom-minus {
    width: 6px;
    height: 2px;
    margin-left: 5px;
    background: #666;
}
.slider {
    width: 100px;
    height: 12px;
    margin-left: 4px;
    display: flex;
    justify-content: center;
    background: linear-gradient(#a6a6a6, #a6a6a6) 0 50% / 100% 1px no-repeat;
}
.slider i {
    width: 4px;
    height: 12px;
    background: #666;
}
.zoom-plus {
    width: 9px;
    height: 9px;
    margin-left: 4px;
    background:
        linear-gradient(#666, #666) 50% 50% / 9px 2px no-repeat,
        linear-gradient(#666, #666) 50% 50% / 2px 9px no-repeat;
}
.zoom-pct {
    width: 27px;
    margin: 0 19px 0 15px;
    white-space: nowrap;
}
```
